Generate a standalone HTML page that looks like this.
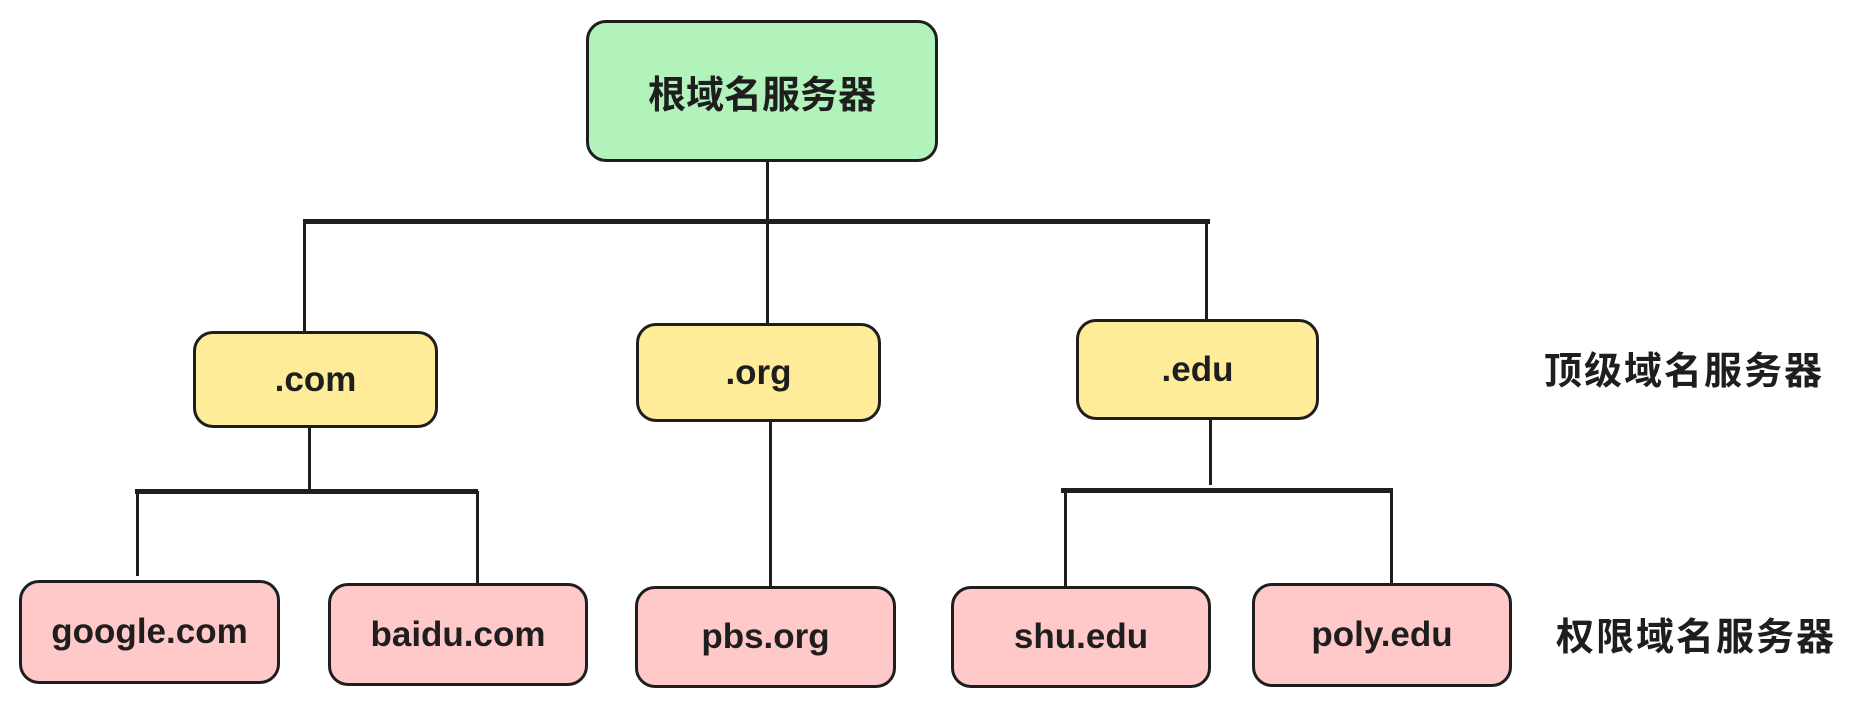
<!DOCTYPE html>
<html><head><meta charset="utf-8"><style>
html,body{margin:0;padding:0;background:#fff;}
body{width:1855px;height:711px;position:relative;overflow:hidden;font-family:"Liberation Sans","Noto Sans CJK SC",sans-serif;color:#1e1e1e;}
.b{position:absolute;box-sizing:border-box;border:3.5px solid #1e1e1e;border-radius:20px;display:flex;align-items:center;justify-content:center;font-size:35px;font-weight:bold;}
.g{background:#b2f2bb}.y{background:#ffec99}.p{background:#ffc9c9}
.l{position:absolute;background:#1e1e1e;}
.t{position:absolute;font-size:38px;letter-spacing:2px;white-space:nowrap;font-weight:bold;}
</style></head><body>
<div class="l" style="left:766px;top:160px;width:3px;height:165px"></div>
<div class="l" style="left:303px;top:219px;width:907px;height:5px"></div>
<div class="l" style="left:303px;top:221px;width:3px;height:112px"></div>
<div class="l" style="left:1205px;top:221px;width:3px;height:100px"></div>
<div class="l" style="left:308px;top:426px;width:3px;height:66px"></div>
<div class="l" style="left:135px;top:489px;width:343px;height:5px"></div>
<div class="l" style="left:136px;top:491px;width:3px;height:85px"></div>
<div class="l" style="left:476px;top:491px;width:3px;height:93px"></div>
<div class="l" style="left:769px;top:420px;width:3px;height:168px"></div>
<div class="l" style="left:1209px;top:418px;width:3px;height:67px"></div>
<div class="l" style="left:1061px;top:488px;width:332px;height:5px"></div>
<div class="l" style="left:1064px;top:490px;width:3px;height:96px"></div>
<div class="l" style="left:1390px;top:490px;width:3px;height:94px"></div>

<div class="b g" style="left:586px;top:20px;width:352px;height:142px;font-size:38px">根域名服务器</div>
<div class="b y" style="left:193px;top:331px;width:245px;height:97px">.com</div>
<div class="b y" style="left:636px;top:323px;width:245px;height:99px">.org</div>
<div class="b y" style="left:1076px;top:319px;width:243px;height:101px">.edu</div>
<div class="b p" style="left:19px;top:580px;width:261px;height:104px">google.com</div>
<div class="b p" style="left:328px;top:583px;width:260px;height:103px">baidu.com</div>
<div class="b p" style="left:635px;top:586px;width:261px;height:102px">pbs.org</div>
<div class="b p" style="left:951px;top:586px;width:260px;height:102px">shu.edu</div>
<div class="b p" style="left:1252px;top:583px;width:260px;height:104px">poly.edu</div>

<div class="t" style="left:1544px;top:340px">顶级域名服务器</div>
<div class="t" style="left:1556px;top:606px">权限域名服务器</div>
</body></html>
